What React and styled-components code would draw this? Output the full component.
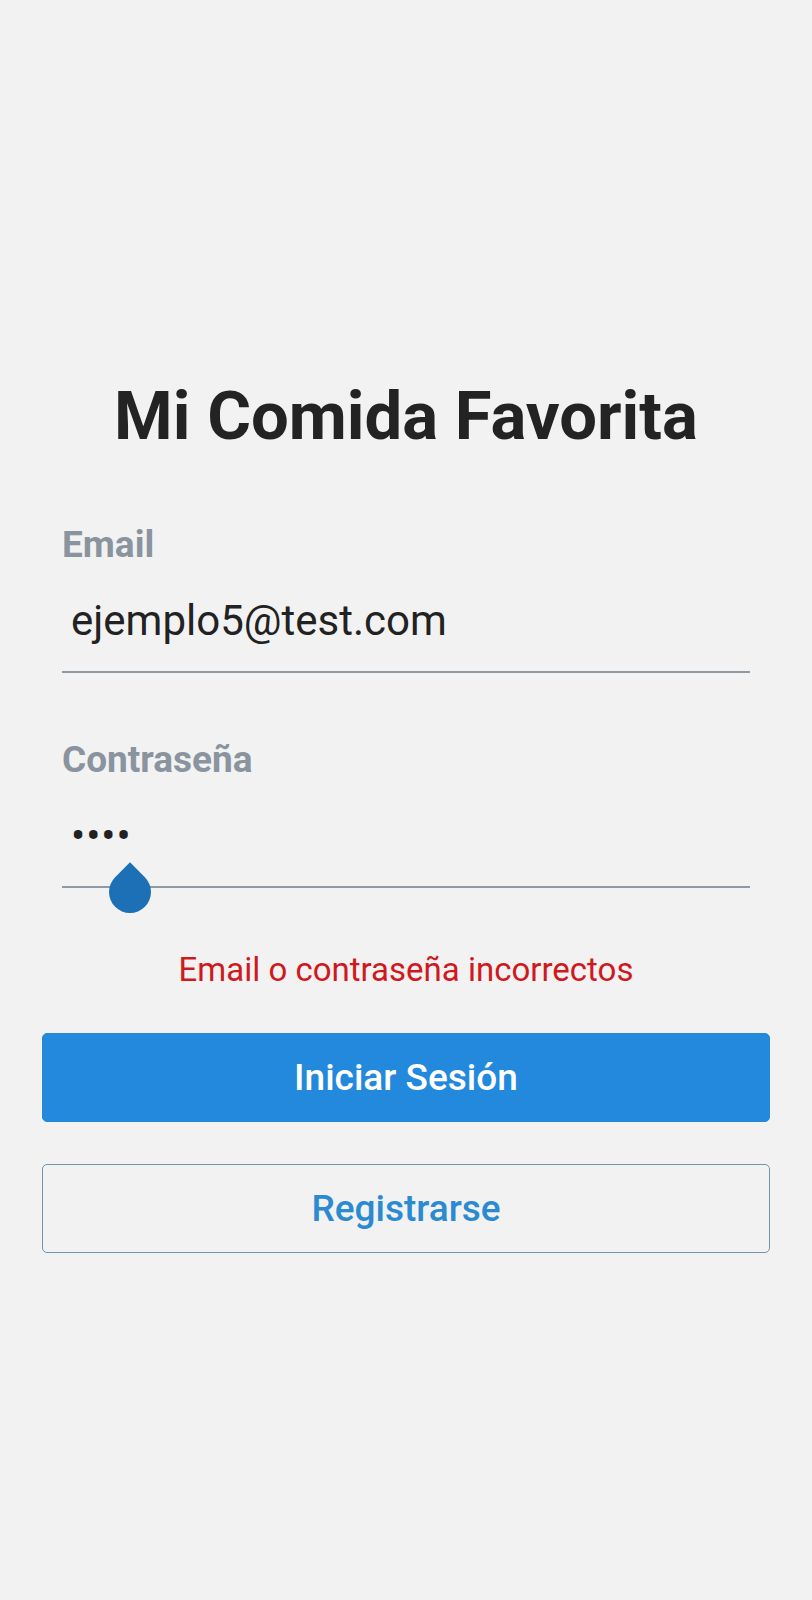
import React, { useState } from 'react';
import styled, { createGlobalStyle } from 'styled-components';

const GlobalStyle = createGlobalStyle`
  body {
    margin: 0;
    background: #f2f2f2;
    font-family: Roboto, "Liberation Sans", sans-serif;
  }
`;

const App = () => {
  const [email, setEmail] = useState('ejemplo5@test.com');
  const [password, setPassword] = useState('1234');

  return (
    <Container>
      <GlobalStyle />
      <Title>Mi Comida Favorita</Title>

      <Field>
        <Label>Email</Label>
        <Input
          type="text"
          value={email}
          onChange={(e) => setEmail(e.target.value)}
        />
      </Field>

      <Field>
        <Label>Contraseña</Label>
        <InputWrap>
          <Input
            type="password"
            dots
            value={password}
            onChange={(e) => setPassword(e.target.value)}
          />
          {/* text selection handle */}
          <Handle />
        </InputWrap>
      </Field>

      <ErrorText>Email o contraseña incorrectos</ErrorText>

      <Button primary>Iniciar Sesión</Button>
      <Button>Registrarse</Button>
    </Container>
  );
};

export default App;

const Container = styled.div`
  display: flex;
  flex-direction: column;
  min-height: 1600px;
  box-sizing: border-box;
  padding: 376px 42px 0;
`;

const Title = styled.h1`
  margin: 0 0 67px;
  text-align: center;
  font-size: 67px;
  font-weight: 700;
  line-height: 80px;
  color: #232323;
`;

const Field = styled.div`
  display: flex;
  flex-direction: column;
  padding: 0 20px;
  margin-bottom: 65px;

  & + & {
    margin-bottom: 62px;
  }
`;

const Label = styled.label`
  font-size: 37px;
  font-weight: 700;
  line-height: 44px;
  color: #8a949f;
`;

const InputWrap = styled.div`
  position: relative;
`;

const Input = styled.input`
  display: block;
  width: 100%;
  box-sizing: border-box;
  margin-top: 28px;
  padding: 0 9px 26px;
  border: none;
  border-bottom: 2px solid #8f9aa5;
  background: transparent;
  outline: none;
  font-family: Roboto, "Liberation Sans", sans-serif;
  font-size: 42px;
  line-height: 50px;
  height: 78px;
  color: #222;
  letter-spacing: ${(props) => (props.dots ? '1px' : '0')};
`;

const Handle = styled.div`
  position: absolute;
  left: 47px;
  bottom: -25px;
  width: 42px;
  height: 42px;
  background: #1d70b5;
  border-radius: 0 50% 50% 50%;
  transform: rotate(45deg);
`;

const ErrorText = styled.p`
  margin: 0 0 43px;
  text-align: center;
  font-size: 33px;
  line-height: 40px;
  color: #d0191d;
`;

const Button = styled.button`
  height: 89px;
  margin-bottom: 42px;
  border-radius: 5px;
  border: 1px solid ${(props) => (props.primary ? '#2389dc' : '#7295ab')};
  background: ${(props) => (props.primary ? '#2389dc' : 'transparent')};
  color: ${(props) => (props.primary ? '#ffffff' : '#2b8ad0')};
  font-family: Roboto, "Liberation Sans", sans-serif;
  font-size: 37px;
  font-weight: 500;
  cursor: pointer;
`;
